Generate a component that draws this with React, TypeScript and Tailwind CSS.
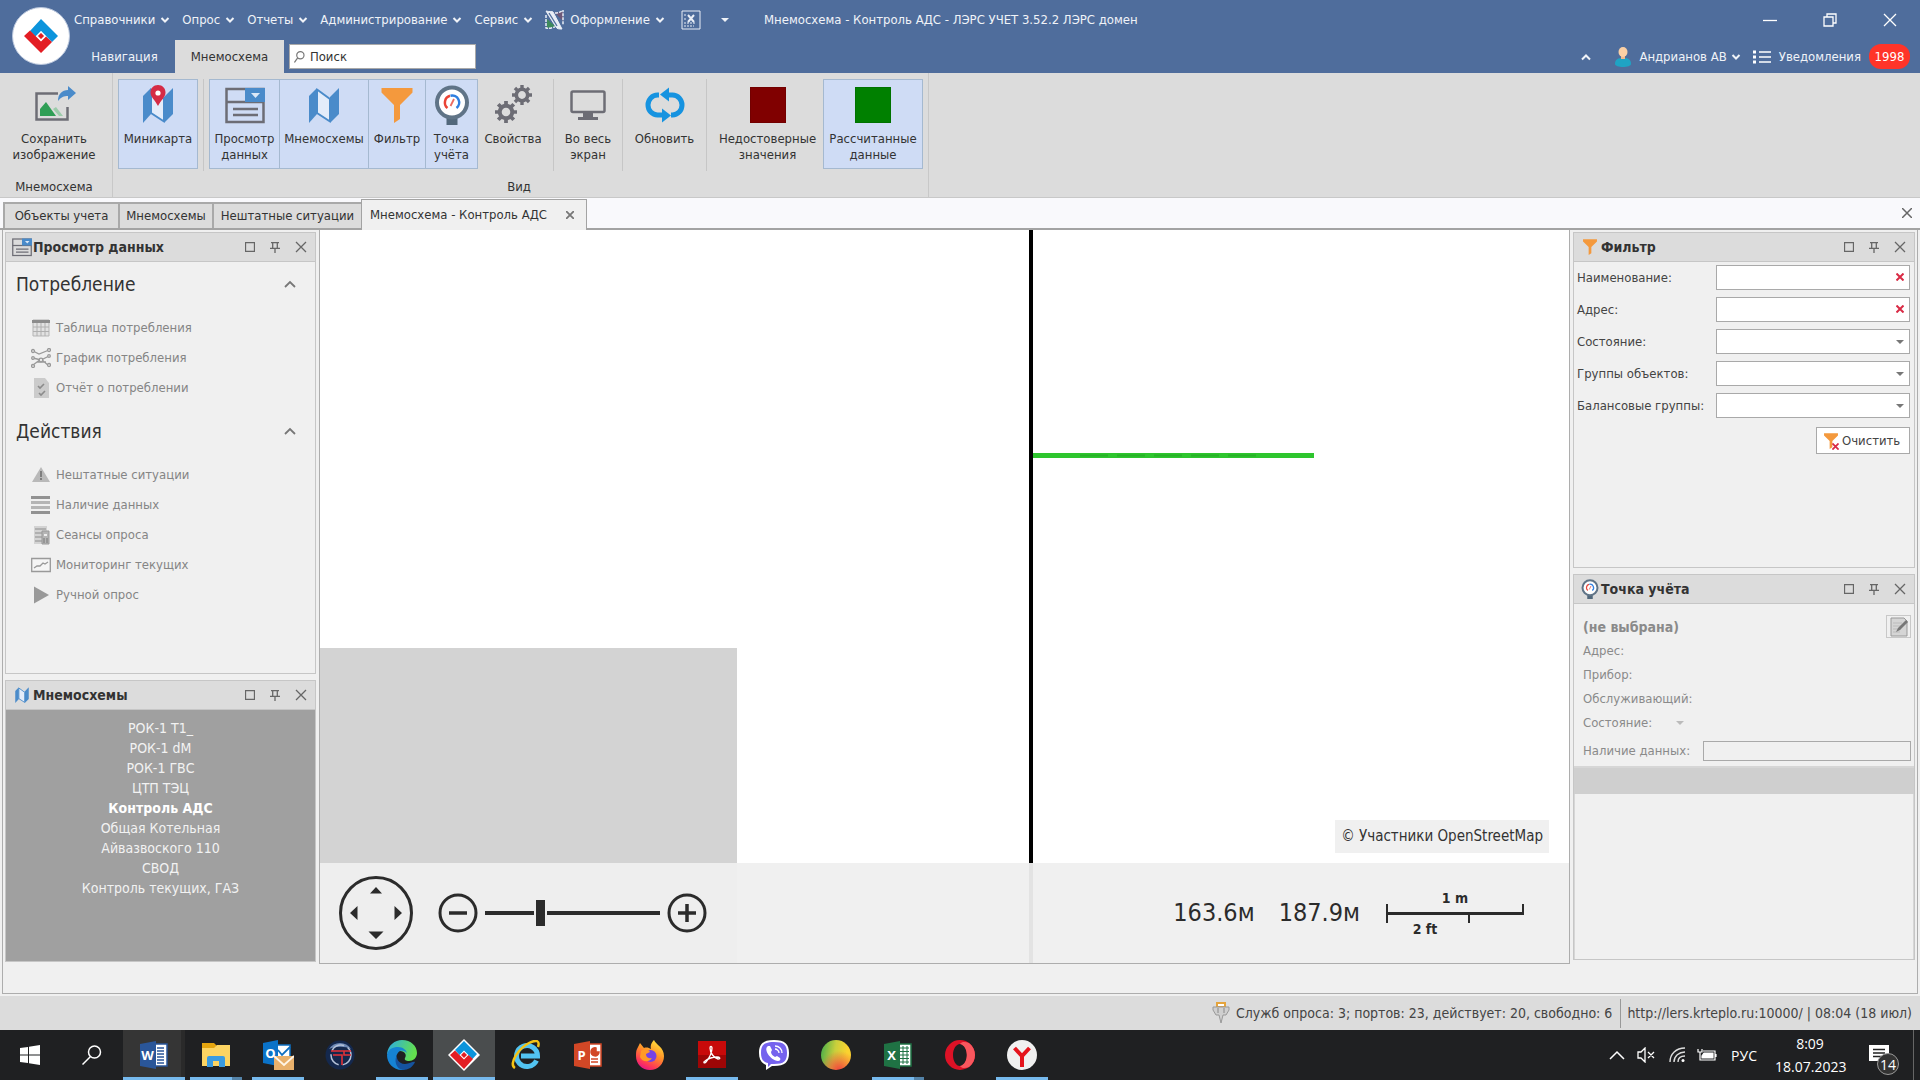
import type { ReactNode } from "react";

const UI_FONT = "font-['DejaVu_Sans_Condensed','DejaVu_Sans',sans-serif]";

type ChevronProps = { up?: boolean; className?: string };

function Chevron({ up, className = "" }: ChevronProps) {
  return (
    <svg className={className} width="10" height="8" viewBox="0 0 10 8" fill="none" stroke="currentColor" strokeWidth="2">
      <path d={up ? "M1 6.5 5 2.5 9 6.5" : "M1.5 2 5 5.5 8.5 2"} />
    </svg>
  );
}

function LersMark({ size }: { size: number }) {
  return (
    <svg width={size} height={size} viewBox="0 0 36 36">
      <path d="M18 1 35 18 29 24 18 13 12.5 18.5 7 13z" fill="#0c94dc" />
      <path d="M1 18 7 12.500 18 23.500 23 18.500 29 24 18 35z" fill="#e31e24" />
      <path d="M18 14 22 18 18 22 14 18z" fill="#e31e24" stroke="#fff" strokeWidth="1.200" />
    </svg>
  );
}

function MapIcon({ size = 40, pin }: { size?: number; pin?: boolean }) {
  return (
    <svg width={size} height={size} viewBox="0 0 40 40">
      <path d="M5 11 13 3v26l-8 9z" fill="#4a8bca" />
      <path d="M26 12 35 3v26l-9 9z" fill="#4a8bca" />
      <path d="M13 4.500 26 14v22.500L13 28z" fill="#e3ecfa" stroke="#4a8bca" strokeWidth="2" strokeLinejoin="round" />
      {pin && (
        <>
          <path d="M20 0c-4.500 0-7.500 3.300-7.500 7.500C12.500 12 17 15 20 21c3-6 7.500-9 7.500-13.500C27.500 3.300 24.500 0 20 0z" fill="#d52b45" />
          <circle cx="20" cy="8" r="2.600" fill="#fff" />
        </>
      )}
    </svg>
  );
}

function DataViewIcon({ width = 40, height = 40 }: { width?: number; height?: number }) {
  return (
    <svg width={width} height={height} viewBox="0 0 40 40">
      <rect x="1.500" y="4" width="37" height="33" fill="none" stroke="#6d6d75" strokeWidth="2.500" />
      <path d="M1 17h38" stroke="#6d6d75" strokeWidth="2.500" />
      <path d="M20 3h20v14H20z" fill="#4a8bca" />
      <path d="M26 8h9l-4.500 5z" fill="#dce8f7" />
      <path d="M8 24h25M8 30h25" stroke="#6d6d75" strokeWidth="2.500" />
    </svg>
  );
}

function FunnelIcon({ size = 40, className = "" }: { size?: number; className?: string }) {
  return (
    <svg className={className} width={size} height={size} viewBox="0 0 40 40">
      <path d="M4.500 3h31v4.500L23 20v14l-6 4V20L4.500 7.500z" fill="#f4993d" />
    </svg>
  );
}

function GaugeIcon({ size = 40 }: { size?: number }) {
  return (
    <svg width={size} height={size} viewBox="0 0 40 40" fill="none">
      <path d="M14.500 32h11v8h-11z" fill="#52687b" />
      <circle cx="20" cy="17.500" r="15" fill="#fff" stroke="#607487" strokeWidth="4" />
      <path d="M15.500 23a7 7 0 0 1 2.500-12.200" stroke="#ea4335" strokeWidth="2.500" />
      <path d="M18.500 10.700a7 7 0 0 1 6 12.300" stroke="#2f7fe0" strokeWidth="2.500" />
      <path d="m18.500 21 3.500-7" stroke="#ea6a60" strokeWidth="1.800" />
    </svg>
  );
}

function SaveImageIcon() {
  return (
    <svg width="44" height="40" viewBox="0 0 44 40">
      <path d="M26 8.500H4.500v26h31V22" fill="none" stroke="#6d6d75" strokeWidth="2.500" />
      <path d="M8 31v-7l6-7 10 14z" fill="#2f9e55" />
      <path d="m21 24 3-2 7 9h-4z" fill="#9ccbaa" />
      <path d="M26 16c0-7 4-11 10-11V1l8 7-8 7v-4c-4 0-7 1-10 5z" fill="#4a8bca" />
    </svg>
  );
}

function Gear({ cx, cy, r }: { cx: number; cy: number; r: number }) {
  return (
    <g transform={`translate(${cx} ${cy})`} fill="none" stroke="#6d6d75">
      <circle r={r * 0.57} strokeWidth={r * 0.36} />
      {[0, 45, 90, 135].map((angle) => (
        <path
          key={angle}
          transform={`rotate(${angle})`}
          d={`M0 ${-r}V${-r * 0.65}M0 ${r * 0.65}V${r}`}
          strokeWidth={r * 0.34}
        />
      ))}
    </g>
  );
}

function GearsIcon() {
  return (
    <svg width="40" height="40" viewBox="0 0 40 40">
      <Gear cx={13} cy={27} r={11} />
      <Gear cx={29} cy={10} r={10} />
    </svg>
  );
}

function MonitorIcon() {
  return (
    <svg width="40" height="40" viewBox="0 0 40 40">
      <rect x="3.500" y="6.500" width="33" height="20.500" rx="1.500" fill="none" stroke="#6d6d75" strokeWidth="2.500" />
      <path d="M15 27h10v5h5v3H10v-3h5z" fill="#6d6d75" />
    </svg>
  );
}

function RefreshIcon() {
  return (
    <svg width="42" height="40" viewBox="0 0 42 40" fill="none" stroke="#1693e0" strokeWidth="5">
      <path d="M15 10h-1.500a9.500 10 0 0 0 0 20H19" />
      <path d="M27 30h1.500a9.500 10 0 0 0 0-20H24" />
      <path d="M25 2.500v14l-9-7z" fill="#1693e0" stroke="none" />
      <path d="M18 23.500v14l9-7z" fill="#1693e0" stroke="none" />
    </svg>
  );
}

function ColorSwatch({ className }: { className: string }) {
  return <span className={`mt-0.5 block size-9 border border-black/10 ${className}`} />;
}

const MENU = ["Справочники", "Опрос", "Отчеты", "Администрирование", "Сервис"];

function TitleBar() {
  return (
    <header className="flex h-[73px] bg-[#4f6d9c] text-[13px] text-[#f0f3f8]">
      <div className="w-[74px] shrink-0 pt-[7px] pl-3">
        <button aria-label="Главное меню" className="flex size-[58px] items-center justify-center rounded-full border border-[#b9c6dc] bg-white">
          <LersMark size={36} />
        </button>
      </div>
      <div className="flex min-w-0 flex-1 flex-col">
        <div className="flex h-10 items-center">
          <nav className="flex w-[690px] shrink-0 items-center gap-3">
            {MENU.map((item) => (
              <button key={item} className="flex items-center gap-[5px] whitespace-nowrap">
                {item}
                <Chevron />
              </button>
            ))}
            <button className="flex items-center gap-[5px] whitespace-nowrap">
              <svg width="20" height="20" viewBox="0 0 20 20" fill="none" stroke="#e9eef6" strokeWidth="1.500">
                <path d="M2 9v9c4 0 6-2 9-1z" fill="#3e8a5c" stroke="none" />
                <path d="M9 2c4 2 6-1 9 0v9z" fill="#6d5878" stroke="none" />
                <path d="M10 3c3 0 6-1 8-3v15M1 5v13c4 1 7-1 9-1" strokeDasharray="3 1" />
                <path d="M1 1c3 1 6 0 7 1l9 17c-3 0-5 0-6-2z" fill="#e9eef6" strokeWidth="1" />
                <path d="m4 3 8 13" stroke="#4f6d9c" strokeWidth="1.300" />
              </svg>
              Оформление
              <Chevron />
            </button>
            <button aria-label="Закрыть все окна" className="ml-1">
              <svg width="20" height="20" viewBox="0 0 20 20" fill="none" stroke="#e9eef6">
                <path d="M1 1h18v18H1z" />
                <path d="M3 5h3M3 9h3M3 13h12M3 16h10" strokeDasharray="2 1" />
                <path d="m7 5 6 7m0-7-6 7" strokeWidth="2" />
              </svg>
            </button>
            <button aria-label="Настройка панели" className="ml-2">
              <svg width="8" height="4" viewBox="0 0 8 4">
                <path d="M0 0h8L4 4z" fill="#f0f3f8" />
              </svg>
            </button>
          </nav>
          <h1 className="truncate">Мнемосхема - Контроль АДС - ЛЭРС УЧЕТ 3.52.2 ЛЭРС домен</h1>
          <div className="ml-auto flex">
            <button aria-label="Свернуть" className="flex h-10 w-[60px] items-center justify-center">
              <svg width="14" height="14" viewBox="0 0 14 14"><path d="M0 7.500h14" stroke="#fff" strokeWidth="1.300" /></svg>
            </button>
            <button aria-label="Восстановить" className="flex h-10 w-[60px] items-center justify-center">
              <svg width="14" height="14" viewBox="0 0 14 14" fill="none" stroke="#fff" strokeWidth="1.300">
                <path d="M1 4h9v9H1zM4 4V1h9v9h-3" />
              </svg>
            </button>
            <button aria-label="Закрыть" className="flex h-10 w-[60px] items-center justify-center">
              <svg width="14" height="14" viewBox="0 0 14 14" fill="none" stroke="#fff" strokeWidth="1.300">
                <path d="m1 1 12 12M13 1 1 13" />
              </svg>
            </button>
          </div>
        </div>
        <div className="flex h-[33px] items-center">
          <button className="h-full w-[101px]">Навигация</button>
          <button className="h-full w-[109px] bg-[#dcdcdc] text-[#333]">Мнемосхема</button>
          <label className="ml-[5px] flex h-[25px] w-[187px] items-center gap-[5px] border border-[#a9a9a9] bg-white px-1">
            <svg width="12" height="14" viewBox="0 0 12 14" fill="none" stroke="#777" strokeWidth="1.300">
              <circle cx="7" cy="5" r="4" />
              <path d="m4 8-3.500 5" />
            </svg>
            <input aria-label="Поиск" placeholder="Поиск" className="w-full min-w-0 text-[#333] outline-none placeholder:text-[#333]" />
          </label>
          <div className="ml-auto flex items-center pr-[10px]">
            <button aria-label="Свернуть ленту"><Chevron up /></button>
            <button className="ml-6 flex items-center gap-2">
              <svg width="16" height="20" viewBox="0 0 16 20">
                <path d="M0 17c0-5 3-6 8-6s8 1 8 6c0 4-16 4-16 0z" fill="#1fa3c4" />
                <path d="M6 8h4v4H6z" fill="#f0b98c" />
                <ellipse cx="8" cy="5" rx="4.500" ry="5" fill="#fbd0a5" />
              </svg>
              Андрианов АВ
              <Chevron className="-ml-1" />
            </button>
            <button className="ml-3 flex items-center gap-2">
              <svg width="18" height="14" viewBox="0 0 18 14" stroke="#fff" strokeWidth="1.500">
                <path d="M6 2h12M6 7h12M6 12h12" />
                <path d="M0 2h3M0 7h3M0 12h3" strokeWidth="3" />
              </svg>
              Уведомления
              <span className="flex h-[25px] w-[41px] items-center justify-center rounded-xl bg-[#ff3429] text-white">1998</span>
            </button>
          </div>
        </div>
      </div>
    </header>
  );
}

interface RibbonButtonProps {
  icon: ReactNode;
  label: string;
  width: string;
  active?: boolean;
}

function RibbonButton({ icon, label, width, active }: RibbonButtonProps) {
  return (
    <button
      aria-pressed={active}
      className={`flex h-[90px] shrink-0 flex-col items-center border pt-[5px] leading-4 whitespace-pre ${width} ${
        active ? "border-[#a5b9d0] bg-[#cfdcf5]" : "border-transparent"
      }`}
    >
      <span className="mb-1.5 flex h-10 justify-center">{icon}</span>
      {label}
    </button>
  );
}

function RibbonDivider({ className }: { className: string }) {
  return <span className={`h-[92px] w-px shrink-0 bg-[#c6c6c6] ${className}`} />;
}

function Ribbon() {
  return (
    <section className="flex h-[125px] border-b border-[#c8c8c8] bg-[#dcdcdc] text-[13px] text-[#333]">
      <div className="flex w-[113px] shrink-0 flex-col items-center border-r border-[#c8c8c8] pt-1.5 pr-1">
        <RibbonButton icon={<SaveImageIcon />} label={"Сохранить\nизображение"} width="w-[100px]" />
        <span className="mt-2">Мнемосхема</span>
      </div>
      <div className="flex w-[816px] shrink-0 flex-col border-r border-[#c8c8c8] pt-1.5 pl-[5px]">
        <div className="flex">
          <RibbonButton active icon={<MapIcon pin />} label="Миникарта" width="w-[80px]" />
          <RibbonDivider className="mx-[5px]" />
          <RibbonButton active icon={<DataViewIcon />} label={"Просмотр\nданных"} width="w-[71px]" />
          <RibbonButton active icon={<MapIcon />} label="Мнемосхемы" width="-ml-px w-[90px]" />
          <RibbonButton active icon={<FunnelIcon />} label="Фильтр" width="-ml-px w-[58px]" />
          <RibbonButton active icon={<GaugeIcon />} label={"Точка\nучёта"} width="-ml-px w-[53px]" />
          <RibbonButton icon={<GearsIcon />} label="Свойства" width="w-[70px]" />
          <RibbonDivider className="mx-[5px]" />
          <RibbonButton icon={<MonitorIcon />} label={"Во весь\nэкран"} width="w-[58px]" />
          <RibbonDivider className="mx-[5px]" />
          <RibbonButton icon={<RefreshIcon />} label="Обновить" width="w-[73px]" />
          <RibbonDivider className="mx-[5px]" />
          <RibbonButton icon={<ColorSwatch className="bg-[#800000]" />} label={"Недостоверные\nзначения"} width="w-[111px]" />
          <RibbonButton active icon={<ColorSwatch className="bg-[#008000]" />} label={"Рассчитанные\nданные"} width="w-[100px]" />
        </div>
        <span className="mt-1.5 pr-2 text-center">Вид</span>
      </div>
    </section>
  );
}

const TABS = [
  { title: "Объекты учета", width: "w-[115px]" },
  { title: "Мнемосхемы", width: "w-[94px]" },
  { title: "Нештатные ситуации", width: "w-[149px]" },
];

function DocumentTabs() {
  return (
    <nav className="flex h-8 items-end border-b-2 border-[#a3a3a3] bg-[#f9f9fc] pl-[3px] text-[13px] text-[#333]">
      {TABS.map((tab) => (
        <button key={tab.title} className={`h-[26px] border-2 border-r-0 border-b-0 border-[#a9a9a9] bg-[#dcdcdc] whitespace-nowrap ${tab.width}`}>
          {tab.title}
        </button>
      ))}
      <button className="-mb-0.5 flex h-[31px] w-[226px] items-center justify-between border border-b-0 border-[#a3a3a3] bg-[#f0f0f0] px-2 pr-3">
        Мнемосхема - Контроль АДС
        <svg width="8" height="8" viewBox="0 0 8 8" stroke="#777" strokeWidth="1.800"><path d="m0 0 8 8M8 0 0 8" /></svg>
      </button>
      <button aria-label="Закрыть вкладку" className="mr-2 mb-2.5 ml-auto">
        <svg width="10" height="10" viewBox="0 0 10 10" stroke="#666" strokeWidth="1.500"><path d="m0 0 10 10M10 0 0 10" /></svg>
      </button>
    </nav>
  );
}

interface DockPanelProps {
  title: string;
  icon: ReactNode;
  className?: string;
  children: ReactNode;
}

function DockPanel({ title, icon, className = "", children }: DockPanelProps) {
  return (
    <section className={`flex flex-col border border-[#c6c6c6] bg-[#f0f0f0] ${className}`}>
      <header className="flex h-[29px] shrink-0 items-center border-b border-[#c6c6c6] bg-[#dcdcdc] px-[5px] text-[#333]">
        <span className="flex w-[22px] shrink-0 justify-center">{icon}</span>
        <h2 className="text-[14px] font-bold">{title}</h2>
        <div className="ml-auto flex items-center gap-[15px] pr-[3px] text-[#666]">
          <button aria-label="Развернуть">
            <svg width="10" height="10" viewBox="0 0 10 10" fill="none" stroke="currentColor" strokeWidth="1.300"><path d="M.5.5h9v9h-9z" /></svg>
          </button>
          <button aria-label="Закрепить">
            <svg width="10" height="11" viewBox="0 0 10 11" fill="none" stroke="currentColor" strokeWidth="1.300">
              <path d="M1 .7h8M2.700.7v5M7.300.7v5M0 6.300h10M5 6v5" />
            </svg>
          </button>
          <button aria-label="Закрыть">
            <svg width="12" height="12" viewBox="0 0 12 12" stroke="currentColor" strokeWidth="1.300"><path d="m1 1 10 10M11 1 1 11" /></svg>
          </button>
        </div>
      </header>
      {children}
    </section>
  );
}

const CONSUMPTION = [
  {
    label: "Таблица потребления",
    icon: (
      <>
        <path d="M2 2h16v16H2z" fill="#e2e2e2" stroke="#b5b5b5" />
        <path d="M1 2h18v3H1z" fill="#8c8c8c" />
        <path d="M2 9h16M2 13.500h16M6 5v13M10 5v13M14 5v13" stroke="#b0b0b0" />
      </>
    ),
  },
  {
    label: "График потребления",
    icon: (
      <g fill="#eee" stroke="#999" strokeWidth="1.300">
        <path d="m2 3 6 3 10-4M2 17l8-6 8 7M2 10l8 2 8-4M6 14l9 0" fill="none" />
        <circle cx="2" cy="3" r="1.500" /><circle cx="18" cy="2" r="1.500" /><circle cx="2" cy="18" r="1.500" />
        <circle cx="18" cy="17" r="1.500" /><circle cx="10" cy="12" r="1.800" /><circle cx="2" cy="10" r="1.300" /><circle cx="18" cy="8" r="1.300" />
      </g>
    ),
  },
  {
    label: "Отчёт о потреблении",
    icon: (
      <>
        <path d="M3 0h11l4 5v15H3z" fill="#cbcbcb" />
        <path d="m7 8 2 2 4-4M8 15l2 2 4-4" fill="none" stroke="#8b8b8b" strokeWidth="1.600" />
      </>
    ),
  },
];

const ACTIONS = [
  {
    label: "Нештатные ситуации",
    icon: (
      <>
        <path d="m10 2 9 15H1z" fill="#b9b9b9" />
        <path d="M10 6v6M10 13v2" stroke="#7d7d7d" strokeWidth="2" />
      </>
    ),
  },
  {
    label: "Наличие данных",
    icon: (
      <>
        <path d="M0 2.500h19M0 17.500h19" stroke="#929292" strokeWidth="3" />
        <path d="M0 7.500h19M0 12.500h19" stroke="#b5b5b5" strokeWidth="3" />
      </>
    ),
  },
  {
    label: "Сеансы опроса",
    icon: (
      <>
        <path d="M3 1h13v18H3z" fill="#d3d3d3" />
        <path d="M4 4h11M4 8h9M4 12h7M4 16h7" stroke="#b0b0b0" strokeWidth="2" />
        <path d="M11 6h7v13h-7z" fill="#b5b5b5" stroke="#999" />
        <path d="M13 9h3v2h-3z" fill="#eee" />
        <path d="M13 13v5M16 13v5" stroke="#777" />
      </>
    ),
  },
  {
    label: "Мониторинг текущих",
    icon: (
      <>
        <path d="M.7 3.500h18.600v13H.700z" fill="#f5f5f5" stroke="#999" strokeWidth="1.300" />
        <path d="m3 13 3-2h3l3-3 2 1 3-2" fill="none" stroke="#999" strokeWidth="1.300" />
      </>
    ),
  },
  { label: "Ручной опрос", icon: <path d="M3 1.500 18 10 3 18.500z" fill="#999" /> },
];

function NavGroup({ title, items }: { title: string; items: typeof ACTIONS }) {
  return (
    <div>
      <button className="flex w-full items-center justify-between pr-[19px] pl-2.5 text-[19px] leading-7 text-[#333]">
        {title}
        <svg width="12" height="8" viewBox="0 0 12 8" fill="none" stroke="#777" strokeWidth="1.800"><path d="m1 7 5-5 5 5" /></svg>
      </button>
      <ul className="mt-[15px] pl-[25px]">
        {items.map((item) => (
          <li key={item.label}>
            <button className="flex h-[30px] items-center gap-[5px]" disabled>
              <svg width="20" height="20" viewBox="0 0 20 20">{item.icon}</svg>
              {item.label}
            </button>
          </li>
        ))}
      </ul>
    </div>
  );
}

const SCHEMES = [
  "РОК-1 Т1_",
  "РОК-1 dM",
  "РОК-1 ГВС",
  "ЦТП ТЭЦ",
  "Контроль АДС",
  "Общая Котельная",
  "Айвазвоского 110",
  "СВОД",
  "Контроль текущих, ГАЗ",
];

function LeftDock() {
  return (
    <aside className="flex w-[316px] shrink-0 flex-col gap-1.5 py-0.5 pr-[3px] pl-0.5 text-[13px] text-[#858585]">
      <DockPanel title="Просмотр данных" icon={<DataViewIcon width={20} height={20} />} className="flex-1">
        <div className="flex flex-col gap-3.5 pt-2">
          <NavGroup title="Потребление" items={CONSUMPTION} />
          <NavGroup title="Действия" items={ACTIONS} />
        </div>
      </DockPanel>
      <DockPanel title="Мнемосхемы" icon={<MapIcon size={18} />} className="h-[282px]">
        <ul className="flex-1 bg-[#a0a0a0] pt-2 text-center text-[14px] leading-5 text-[#f2f2f2]">
          {SCHEMES.map((name) => (
            <li key={name}>
              <button className={name === "Контроль АДС" ? "font-bold text-white" : ""}>{name}</button>
            </li>
          ))}
        </ul>
      </DockPanel>
    </aside>
  );
}

function MapView() {
  return (
    <main className="relative flex min-w-0 flex-1 flex-col justify-end border border-t-0 border-[#adadad] bg-white">
      <svg className="absolute inset-0 size-full" aria-hidden="true">
        <rect x="0" y="418" width="417" height="320" fill="#d3d3d3" />
        <rect x="709" y="0" width="4" height="740" fill="#000" />
        <rect x="713" y="223" width="281" height="5" fill="#2ec52e" />
        <path d="M760 225.500h180" stroke="#27b127" strokeWidth="2" strokeDasharray="28 9" />
      </svg>
      <a href="#osm" className="relative mr-5 mb-2.5 flex h-[33px] items-center self-end bg-[#f0f0f0] px-1.5 text-[15px] text-[#333]">
        © Участники OpenStreetMap
      </a>
      <div className="relative flex h-[100px] shrink-0 items-center bg-[#efefef]/95 pr-[45px] pl-[19px] text-[#2b2b2b]">
        <button aria-label="Сдвиг карты">
          <svg width="74" height="74" viewBox="0 0 74 74">
            <circle cx="37" cy="37" r="35.500" fill="none" stroke="#2b2b2b" strokeWidth="3" />
            <path d="m37 11 6 6.500H31zM37 63l7.500-7.500h-15zM11 37l7.500-7v14zM63 37l-7.500-7v14z" fill="#2b2b2b" />
          </svg>
        </button>
        <button aria-label="Отдалить" className="ml-[25px]">
          <svg width="40" height="40" viewBox="0 0 40 40" fill="none" stroke="#2b2b2b" strokeWidth="3">
            <circle cx="20" cy="20" r="18" /><path d="M11 20h18" strokeWidth="3.500" />
          </svg>
        </button>
        <input
          type="range"
          aria-label="Масштаб"
          defaultValue={30}
          className="mx-[7px] h-7 w-[175px] appearance-none bg-[linear-gradient(#2b2b2b,#2b2b2b)] bg-[length:100%_4px] bg-center bg-no-repeat [&::-webkit-slider-thumb]:h-[26px] [&::-webkit-slider-thumb]:w-[13px] [&::-webkit-slider-thumb]:appearance-none [&::-webkit-slider-thumb]:border-x-2 [&::-webkit-slider-thumb]:border-[#eee] [&::-webkit-slider-thumb]:bg-[#2b2b2b]"
        />
        <button aria-label="Приблизить">
          <svg width="40" height="40" viewBox="0 0 40 40" fill="none" stroke="#2b2b2b" strokeWidth="3">
            <circle cx="20" cy="20" r="18" /><path d="M11 20h18M20 11v18" strokeWidth="3.500" />
          </svg>
        </button>
        <div className="ml-auto flex items-center text-[25px]">
          <span>163.6м</span>
          <span className="ml-6">187.9м</span>
          <div className="ml-[26px] flex w-[138px] flex-col text-[14px] leading-3 font-bold">
            <span className="text-center">1 m</span>
            <svg width="138" height="19" viewBox="0 0 138 19" fill="none" stroke="#2b2b2b" strokeWidth="2">
              <path d="M1 0v19M137 0v10M83 10v9" />
              <path d="M0 9.500h138" strokeWidth="3" />
            </svg>
            <span className="w-[78px] text-center">2 ft</span>
          </div>
        </div>
      </div>
    </main>
  );
}

function Arrow({ className = "" }: { className?: string }) {
  return (
    <svg className={className} width="8" height="4" viewBox="0 0 8 4"><path d="M0 0h8L4 4z" fill="currentColor" /></svg>
  );
}

const FILTER_FIELDS = [
  { id: "name", label: "Наименование:", kind: "text" },
  { id: "address", label: "Адрес:", kind: "text" },
  { id: "state", label: "Состояние:", kind: "select" },
  { id: "groups", label: "Группы объектов:", kind: "select" },
  { id: "balance", label: "Балансовые группы:", kind: "select" },
];

function FilterPanel() {
  return (
    <DockPanel title="Фильтр" icon={<FunnelIcon size={18} />} className="h-[336px]">
      <form className="flex flex-col gap-[7px] pt-[3px] pr-1 pl-[3px] text-[#444]">
        {FILTER_FIELDS.map((field) => (
          <div key={field.id} className="flex h-[25px] items-center">
            <label htmlFor={field.id} className="w-[139px] shrink-0 whitespace-nowrap">{field.label}</label>
            <div className="relative h-full flex-1">
              {field.kind === "text" ? (
                <>
                  <input id={field.id} className="size-full border border-[#a9a9a9] bg-white px-1 pr-6" />
                  <button type="button" aria-label="Очистить поле" className="absolute top-2 right-1.5">
                    <svg width="8" height="8" viewBox="0 0 8 8" stroke="#d92b45" strokeWidth="2"><path d="m.5.5 7 7m0-7-7 7" /></svg>
                  </button>
                </>
              ) : (
                <>
                  <select id={field.id} className="size-full appearance-none border border-[#a9a9a9] bg-white px-1" />
                  <Arrow className="pointer-events-none absolute top-[11px] right-1.5 text-[#777]" />
                </>
              )}
            </div>
          </div>
        ))}
        <button type="button" className="mt-0.5 flex h-[27px] w-[94px] items-center gap-[3px] self-end border border-[#a9a9a9] bg-white pl-[5px]">
          <span className="flex items-end">
            <FunnelIcon size={18} />
            <svg className="-ml-2" width="7" height="7" viewBox="0 0 8 8" stroke="#d92b45" strokeWidth="2"><path d="m.5.5 7 7m0-7-7 7" /></svg>
          </span>
          Очистить
        </button>
      </form>
    </DockPanel>
  );
}

function MeterPointPanel() {
  return (
    <DockPanel title="Точка учёта" icon={<GaugeIcon size={20} />} className="flex-1">
      <div className="pt-[11px] pr-[3px] pl-[9px] leading-6 text-[#8a8a8a]">
        <div className="flex h-[23px] items-center justify-between">
          <strong className="text-[14px]">(не выбрана)</strong>
          <button aria-label="Изменить" disabled className="flex h-[23px] w-[25px] items-center justify-center border border-[#c8c8c8]">
            <svg width="18" height="20" viewBox="0 0 18 20">
              <path d="M1 1h13l3 3v15H1z" fill="#d5d5d5" stroke="#999" />
              <path d="M3 6h9M3 9h9M3 12h8M3 15h7" stroke="#bbb" />
              <path d="m6 15 2-4 8-8 2 2-8 8z" fill="#777" />
            </svg>
          </button>
        </div>
        <div className="mt-px">Адрес:</div>
        <div>Прибор:</div>
        <div>Обслуживающий:</div>
        <div className="flex items-center">
          <span className="w-[93px]">Состояние:</span>
          <Arrow className="text-[#bbb]" />
        </div>
        <div className="mt-1.5 flex h-5 items-center gap-2">
          <span className="w-[112px] shrink-0 whitespace-nowrap">Наличие данных:</span>
          <span className="h-full flex-1 border border-[#a9a9a9]" />
        </div>
      </div>
      <div className="mt-[5px] h-7 border-t-2 border-[#d6d6d6] bg-[#cfcfcf]" />
      <div className="flex-1 border-x border-[#d6d6d6]" />
    </DockPanel>
  );
}

function StatusBar() {
  return (
    <footer className="flex h-[34px] items-center justify-end bg-[#dcdcdc] pr-2 text-[14px] text-[#444]">
      <svg width="18" height="22" viewBox="0 0 18 22">
        <path d="M5 1h8v4H5z" fill="#fff" stroke="#e5a43c" strokeWidth="2" />
        <path d="M1 5h16v3l-3 5h-3l-2 8-2-8H4L1 8z" fill="#cfcfcf" stroke="#999" />
        <path d="M6 6v5M12 6v5" stroke="#888" />
      </svg>
      <span className="mr-2 ml-1.5">Служб опроса: 3; портов: 23, действует: 20, свободно: 6</span>
      <span className="border-l border-[#999] py-1 pl-1.5">http://lers.krteplo.ru:10000/ | 08:04 (18 июл)</span>
    </footer>
  );
}

function OfficeIcon({ letter, color, children }: { letter: string; color: string; children?: ReactNode }) {
  return (
    <svg width="30" height="30" viewBox="0 0 30 30">
      <path d="M14 4h14v22H14z" fill="#fff" stroke={color} strokeWidth="1.500" />
      {children ?? <path d="M18 8h7M18 11h7M18 14h7M18 17h7M18 20h7M18 23h7" stroke={color} strokeWidth="1.500" />}
      <path d="M1 4 17 1v28L1 26z" fill={color} />
      <text x="8.500" y="20" textAnchor="middle" fontFamily="Open Sans" fontWeight="700" fontSize="13" fill="#fff">{letter}</text>
    </svg>
  );
}

type TaskApp = { name: string; icon: ReactNode; open?: boolean; stacked?: boolean; slot?: string };

const TASKBAR: TaskApp[] = [
  { name: "Word", icon: <OfficeIcon letter="W" color="#2a5699" />, open: true, slot: "bg-[#353535] shadow-[inset_-4px_0_#2a2a2a]" },
  {
    name: "Проводник",
    open: true,
    stacked: true,
    icon: (
      <svg width="30" height="30" viewBox="0 0 30 30">
        <path d="M1 3h12l3 3v6H1z" fill="#e5a50f" />
        <path d="M1 8h12l3-3h13v21H1z" fill="#fcd462" />
        <path d="M6 27V18a2 2 0 0 1 2-2h14a2 2 0 0 1 2 2v9h-6v-6h-6v6z" fill="#3a9be0" />
      </svg>
    ),
  },
  {
    name: "Outlook",
    open: true,
    icon: (
      <svg width="32" height="32" viewBox="0 0 32 32">
        <path d="M15 6h13v14H15z" fill="#fff" stroke="#0f6fc0" strokeWidth="1.500" />
        <path d="m16 11 4 5 8-8" fill="none" stroke="#0f6fc0" strokeWidth="1.800" />
        <path d="M1 4 16 1v26L1 24z" fill="#0a72c8" />
        <text x="8.500" y="19" textAnchor="middle" fontFamily="Open Sans" fontWeight="700" fontSize="13" fill="#fff">O</text>
        <path d="M12 17h20v14H12z" fill="#e8b06b" />
        <path d="m12 17 10 9 10-9" fill="none" stroke="#fff5e6" strokeWidth="1.800" />
      </svg>
    ),
  },
  {
    name: "Teplo",
    icon: (
      <svg width="30" height="30" viewBox="0 0 30 30" fill="none">
        <circle cx="15" cy="15" r="14.500" fill="#14284d" />
        <path d="M4 9a13 13 0 0 1 22 0c-6-3-15-3-22 0z" fill="#6d89b5" />
        <circle cx="16" cy="15" r="10" stroke="#b5c2d8" strokeWidth="1.500" strokeDasharray="14 4" />
        <path d="M6 11h20M8 15h9v10M19 11v4h7" stroke="#e33238" strokeWidth="1.600" />
      </svg>
    ),
  },
  {
    name: "Edge",
    open: true,
    icon: (
      <svg width="30" height="30" viewBox="0 0 30 30">
        <defs>
          <linearGradient id="edgeTop" x1="0" y1="0" x2="1" y2="0.300">
            <stop offset="0" stopColor="#2aa9e8" /><stop offset="1" stopColor="#63e04e" />
          </linearGradient>
        </defs>
        <path d="M0 14C1 5 8 0 15 0c9 0 15 6 15 13 0 5-4 8-8 8-3 0-5-1-4-3 2-3 0-7-5-7C7 11 3 14 0 14z" fill="url(#edgeTop)" />
        <path d="M0 15C1 9 6 7 11 7c5 0 8 3 9 6-2-2-5-3-7-2-7 4-4 18 5 18-1 1-3 1-3 1C6 30 0 23 0 15z" fill="#1583d4" />
        <path d="M11 13c-3 4 0 11 7 11 5 0 8-3 10-2-2 5-7 8-12 8-7-1-10-10-5-17z" fill="#15539e" />
      </svg>
    ),
  },
  {
    name: "ЛЭРС УЧЕТ",
    open: true,
    slot: "bg-[#4a4d4e]",
    icon: (
      <svg width="32" height="32" viewBox="0 0 32 32">
        <path d="m16 0 16 16-16 16L0 16z" fill="#fff" />
        <path d="m16 2 13 13-4.500 5L16 11.500 11.500 16 7 11z" fill="#0c94dc" />
        <path d="M2 16 7 11.500 16 20.500 20.500 16 25 20 16 30z" fill="#e31e24" />
        <path d="m16 13 3 3-3 3-3-3z" fill="#e31e24" />
      </svg>
    ),
  },
  {
    name: "Internet Explorer",
    icon: (
      <svg width="30" height="30" viewBox="0 0 30 30" fill="none">
        <path d="M25.500 20.500A10.500 10.500 0 1 1 26.500 16H10" stroke="#52c3f1" strokeWidth="5" />
        <path d="M4 28C-3 24 8 8 18 3c8-4 11-2 9 4" stroke="#f3c315" strokeWidth="2.500" />
      </svg>
    ),
  },
  {
    name: "PowerPoint",
    icon: (
      <OfficeIcon letter="P" color="#d24726">
        <path d="M23 8a4 4 0 1 0 3 4h-3zM18 19h7M18 22h7" fill="#d24726" stroke="#d24726" strokeWidth="1.500" />
      </OfficeIcon>
    ),
  },
  {
    name: "Firefox",
    icon: (
      <svg width="30" height="30" viewBox="0 0 30 30">
        <defs>
          <linearGradient id="fox" x1="0.800" y1="0" x2="0.300" y2="1">
            <stop offset="0" stopColor="#ffe83d" /><stop offset="0.450" stopColor="#ff9128" /><stop offset="0.800" stopColor="#ff3a55" /><stop offset="1" stopColor="#e31587" />
          </linearGradient>
        </defs>
        <path d="M2 9 5 3l4 5c3-1 5 0 7 1-1-4 1-7 3-9 2 5 10 7 10 16 0 8-6 14-14 14S1 24 1 16c0-3 0-5 1-7z" fill="url(#fox)" />
        <circle cx="15.500" cy="16" r="6" fill="#7542e5" />
        <path d="M6 11c3-2 7-2 9 1l-4 2c0 4 4 5 6 4-3 5-10 4-12-1z" fill="#ff9a26" />
      </svg>
    ),
  },
  {
    name: "Acrobat",
    open: true,
    icon: (
      <svg width="30" height="30" viewBox="0 0 30 30" fill="none">
        <path d="M1 1h28v27H1z" fill="#c80a0a" />
        <path d="M1 15h28v13H1z" fill="#9d0606" />
        <path d="M8 21c-2 1-1 3 1 1 4-5 6-10 6-14 0-2-2-2-2 0 0 5 4 10 8 11 3 0 2-2-1-2-4 0-8 1-12 4z" stroke="#fff" strokeWidth="1.300" />
      </svg>
    ),
  },
  {
    name: "Viber",
    icon: (
      <svg width="30" height="30" viewBox="0 0 30 30">
        <path d="M15 0C4 0 0 4 0 13c0 6 2 10 7 12v5l6-4h2c11 0 15-4 15-13S26 0 15 0z" fill="#fff" />
        <path d="M15 2C5 2 2 5 2 13c0 6 2 9 7 10v4l3-3h3c10 0 13-3 13-11S25 2 15 2z" fill="#7562ee" />
        <path d="M9 6c-5 3 2 14 10 15 2 0 3-2 2-3l-3-2-2 1c-2-1-4-3-4-5l1-2-2-4z" fill="#fff" />
        <path d="M16 6c4 0 7 3 7 7M16 9c2 0 4 2 4 4" fill="none" stroke="#fff" strokeWidth="1.300" />
      </svg>
    ),
  },
  {
    name: "Манго",
    icon: (
      <span className="block size-[30px] rounded-full bg-[radial-gradient(circle_at_60%_100%,#f0523d_5%,transparent_55%),linear-gradient(100deg,#4fb04a_5%,#c9cf3c_45%,#fbd22f_80%)]" />
    ),
  },
  {
    name: "Excel",
    open: true,
    stacked: true,
    icon: (
      <OfficeIcon letter="X" color="#1f7244">
        <path d="M17 8h9M17 11.500h9M17 15h9M17 18.500h9M17 22h9M20 6v18M24 6v18" stroke="#1f7244" />
      </OfficeIcon>
    ),
  },
  {
    name: "Opera",
    icon: (
      <svg width="30" height="30" viewBox="0 0 30 30">
        <path fillRule="evenodd" d="M15 0a15 15 0 1 0 0 30 15 15 0 0 0 0-30zm0 4c4 0 7 5 7 11s-3 11-7 11-7-5-7-11 3-11 7-11z" fill="#dd1226" />
        <path d="M15 4c2-3 6-2 9-1 8 6 8 18 0 24-3 1-7 2-9-1 9-2 9-20 0-22z" fill="#f9575e" />
      </svg>
    ),
  },
  {
    name: "Яндекс",
    open: true,
    icon: (
      <svg width="30" height="30" viewBox="0 0 30 30" fill="none">
        <circle cx="15" cy="15" r="15" fill="#f0f0f0" />
        <path d="M7.500 8 15 16l7.500-8M15 15v12" stroke="#e5141c" strokeWidth="4" />
      </svg>
    ),
  },
];

function Taskbar() {
  return (
    <footer className="flex h-[50px] bg-[#1f2022] font-['Open_Sans','Noto_Sans',sans-serif] text-white">
      <button aria-label="Пуск" className="flex w-[60px] items-center justify-center">
        <svg width="20" height="20" viewBox="0 0 20 20" fill="#fff"><path d="M0 3 8 2v7.500H0zM9 1.800 20 0v9.500H9zM0 10.500h8V18l-8-1zM9 10.500h11V20L9 18.200z" /></svg>
      </button>
      <button aria-label="Поиск в системе" className="flex w-[63px] items-center justify-center">
        <svg width="20" height="20" viewBox="0 0 20 20" fill="none" stroke="#fff" strokeWidth="1.500"><circle cx="12.500" cy="7" r="6" /><path d="m8.500 11.500-8 8" /></svg>
      </button>
      {TASKBAR.map((app) => (
        <button key={app.name} aria-label={app.name} className={`flex w-[62px] shrink-0 flex-col items-center ${app.slot ?? ""}`}>
          <span className="flex h-[47px] items-center pt-[3px]">{app.icon}</span>
          {app.open && (
            <span className={`flex h-[3px] bg-[#76b9ed] ${app.slot ? "w-full" : "w-[52px]"}`}>
              {app.stacked && <span className="ml-auto w-[10px] bg-[#5483a8]" />}
            </span>
          )}
        </button>
      ))}
      <div className="ml-auto flex items-center">
        <svg width="16" height="10" viewBox="0 0 16 10" fill="none" stroke="#fff" strokeWidth="1.500"><path d="m1 9 7-7 7 7" /></svg>
        <svg className="ml-3" width="18" height="16" viewBox="0 0 18 16" fill="none" stroke="#fff" strokeWidth="1.300">
          <path d="M1 5h3l4-4v14l-4-4H1zM11 5l6 6m0-6-6 6" />
        </svg>
        <svg className="ml-3.5" width="18" height="16" viewBox="0 0 18 16" fill="none" stroke="#ddd" strokeWidth="1.400">
          <path d="M1 15C1 7 7 1 16 1M5 15c0-6 5-10 11-10M9 15c0-4 3-6 7-6" />
          <circle cx="14" cy="13.500" r="1.500" fill="#fff" stroke="none" />
        </svg>
        <svg className="ml-2.5" width="20" height="14" viewBox="0 0 20 14" fill="none" stroke="#fff" strokeWidth="1.200">
          <path d="M6 3h12v9H3V7M19 6v3M1 1v3h4V1M3 4v4" />
          <path d="M7 5h9v5H5V8z" fill="#fff" />
        </svg>
        <span className="ml-3.5 text-[14px]">РУС</span>
        <div className="ml-[18px] w-[70px] text-center text-[14px] leading-[23px] whitespace-nowrap">
          <div>8:09</div>
          <div>18.07.2023</div>
        </div>
        <button aria-label="Уведомления системы" className="relative ml-6 flex h-[50px] w-11 pt-[15px]">
          <svg width="20" height="20" viewBox="0 0 20 20"><path d="M0 0h20v16h-5l-4 4v-4H0z" fill="#fff" /><path d="M4 4.500h12M4 8h12M4 11.500h8" stroke="#222" strokeWidth="1.300" /></svg>
          <span className="absolute top-[23px] left-2 flex size-[22px] items-center justify-center rounded-full border border-[#999] bg-[#333] text-[14px]">14</span>
        </button>
        <span className="mr-1.5 h-[50px] w-px bg-[#666]" />
      </div>
    </footer>
  );
}

export default function App() {
  return (
    <div className={`flex min-h-screen flex-col overflow-hidden bg-[#f0f0f0] ${UI_FONT}`}>
      <TitleBar />
      <Ribbon />
      <DocumentTabs />
      <div className="mr-0.5 mb-0.5 ml-0.5 flex flex-1 flex-col border border-t-0 border-[#adadad] pb-[29px]">
        <div className="flex flex-1">
          <LeftDock />
          <MapView />
          <aside className="flex w-[347px] shrink-0 flex-col gap-1.5 pt-0.5 pr-0.5 pb-1 pl-[3px] text-[13px]">
            <FilterPanel />
            <MeterPointPanel />
          </aside>
        </div>
      </div>
      <StatusBar />
      <Taskbar />
    </div>
  );
}
